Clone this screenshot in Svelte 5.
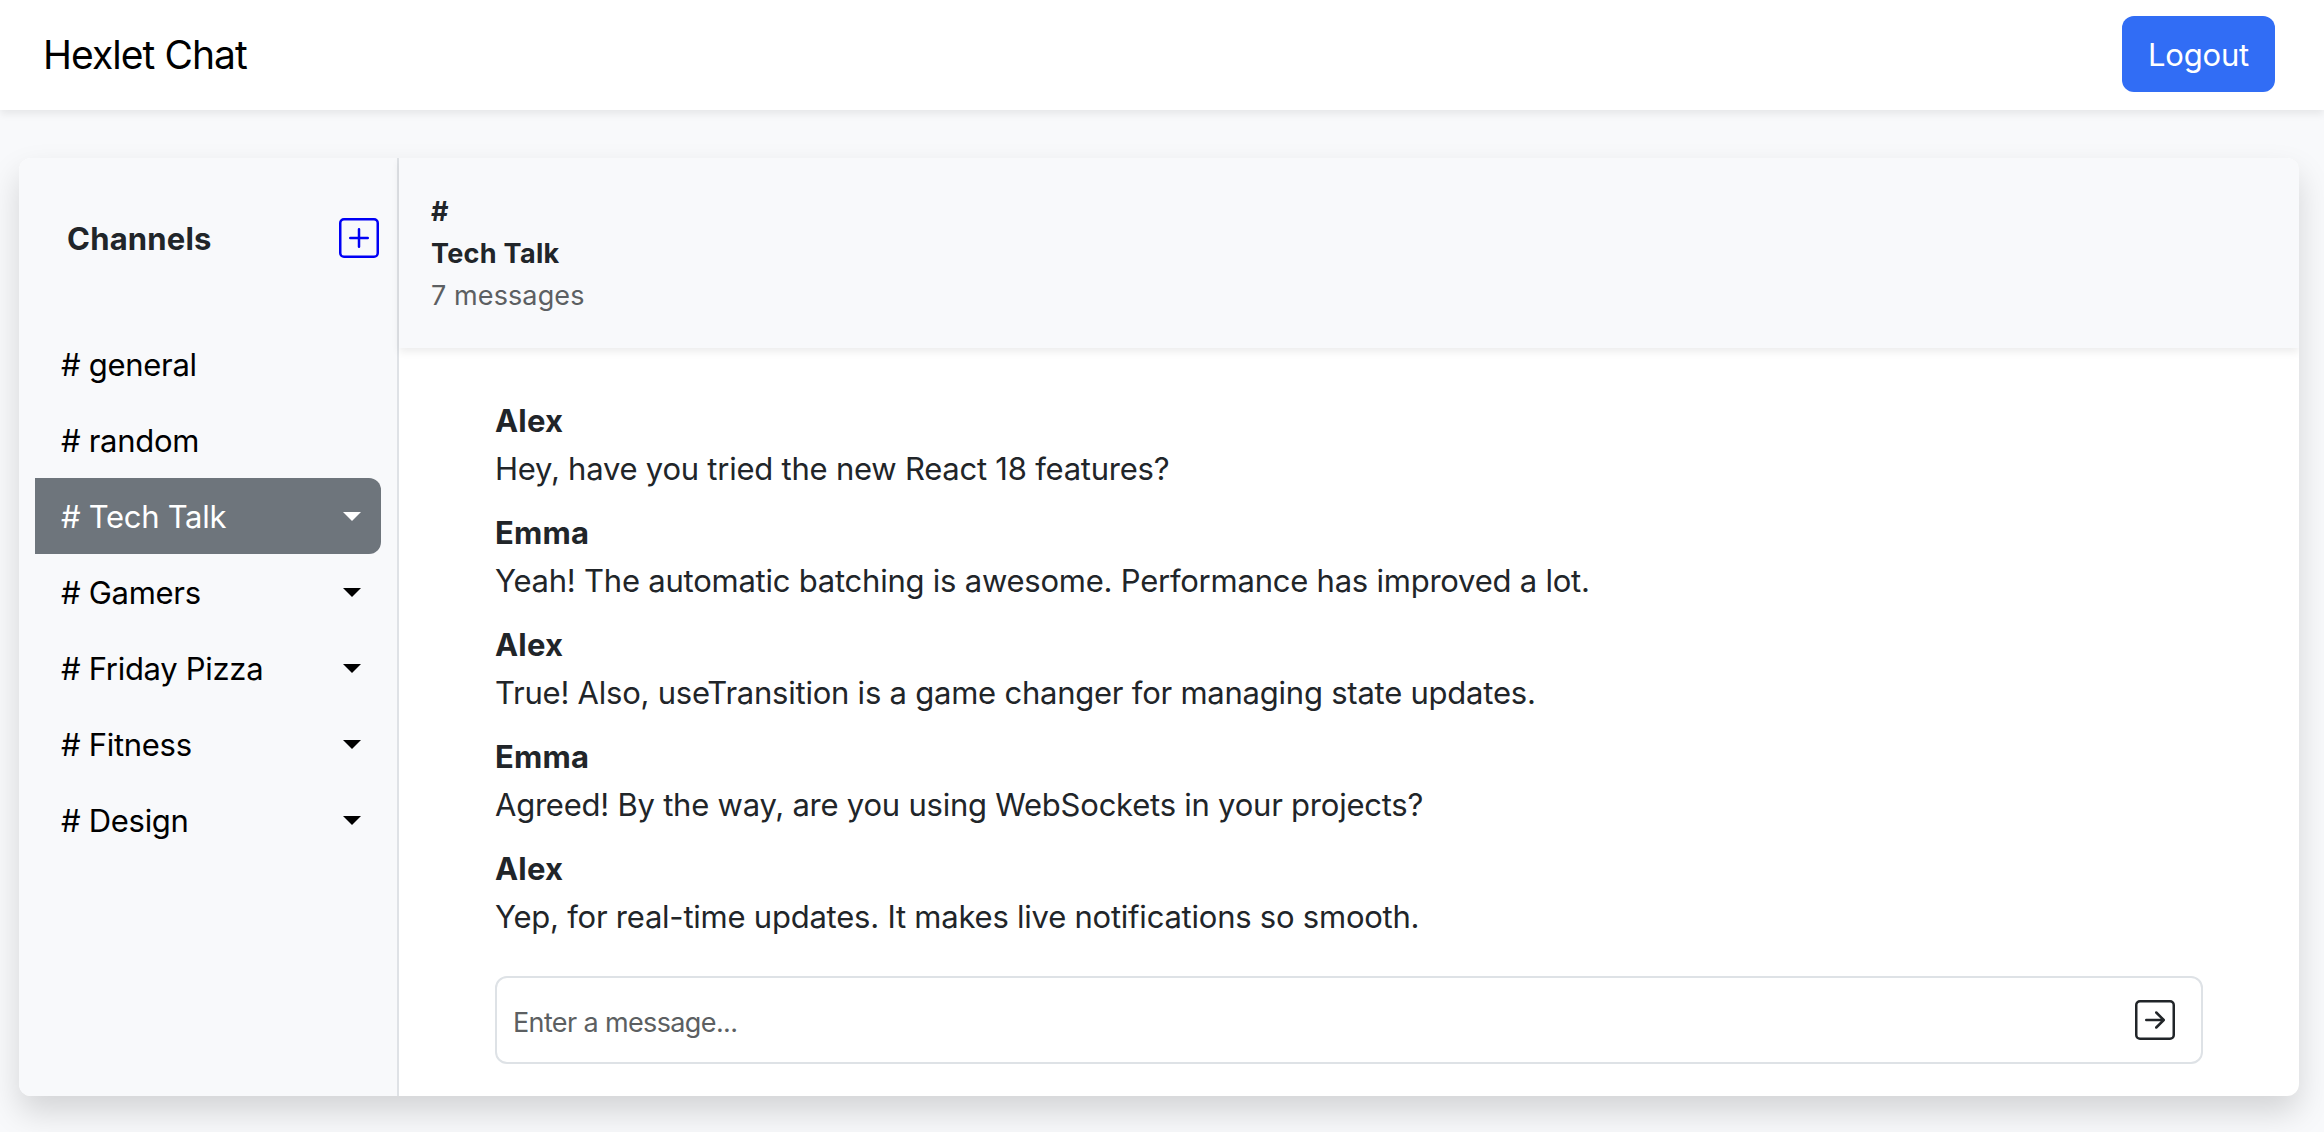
<script>
  const channels = [
    { name: 'general', removable: false },
    { name: 'random', removable: false },
    { name: 'Tech Talk', removable: true },
    { name: 'Gamers', removable: true },
    { name: 'Friday Pizza', removable: true },
    { name: 'Fitness', removable: true },
    { name: 'Design', removable: true },
  ];
  const messages = [
    { author: 'Alex', text: 'Hey, have you tried the new React 18 features?' },
    { author: 'Emma', text: 'Yeah! The automatic batching is awesome. Performance has improved a lot.' },
    { author: 'Alex', text: 'True! Also, useTransition is a game changer for managing state updates.' },
    { author: 'Emma', text: 'Agreed! By the way, are you using WebSockets in your projects?' },
    { author: 'Alex', text: 'Yep, for real-time updates. It makes live notifications so smooth.' },
  ];
  let active = $state('Tech Talk');
  let draft = $state('');
</script>

<div class="page">
  <nav class="navbar">
    <a class="brand" href="#top">Hexlet Chat</a>
    <button class="logout" type="button">Logout</button>
  </nav>

  <div class="card">
    <aside class="sidebar">
      <div class="sidebar-head">
        <b>Channels</b>
        <button class="icon-button add" type="button" aria-label="Add channel">
          <svg viewBox="0 0 16 16" width="40" height="40" fill="currentColor">
            <path d="M14 1a1 1 0 0 1 1 1v12a1 1 0 0 1-1 1H2a1 1 0 0 1-1-1V2a1 1 0 0 1 1-1zM2 0a2 2 0 0 0-2 2v12a2 2 0 0 0 2 2h12a2 2 0 0 0 2-2V2a2 2 0 0 0-2-2z" />
            <path d="M8 4a.5.5 0 0 1 .5.5v3h3a.5.5 0 0 1 0 1h-3v3a.5.5 0 0 1-1 0v-3h-3a.5.5 0 0 1 0-1h3v-3A.5.5 0 0 1 8 4" />
          </svg>
        </button>
      </div>
      <ul class="channels">
        {#each channels as channel}
          <li>
            <button
              class="channel"
              class:active={channel.name === active}
              type="button"
              onclick={() => (active = channel.name)}
            >
              <span># {channel.name}</span>
              {#if channel.removable}<i class="caret"></i>{/if}
            </button>
          </li>
        {/each}
      </ul>
    </aside>

    <main class="chat">
      <header class="chat-head">
        <b>#</b>
        <b>{active}</b>
        <span class="count">7 messages</span>
      </header>
      <div class="messages">
        {#each messages as message}
          <div class="message">
            <b>{message.author}</b>
            <p>{message.text}</p>
          </div>
        {/each}
      </div>
      <form class="composer">
        <input bind:value={draft} placeholder="Enter a message..." aria-label="Message" />
        <button class="icon-button" type="button" aria-label="Send">
          <svg viewBox="0 0 16 16" width="40" height="40" fill="currentColor">
            <path fill-rule="evenodd" d="M15 2a1 1 0 0 0-1-1H2a1 1 0 0 0-1 1v12a1 1 0 0 0 1 1h12a1 1 0 0 0 1-1zM0 2a2 2 0 0 1 2-2h12a2 2 0 0 1 2 2v12a2 2 0 0 1-2 2H2a2 2 0 0 1-2-2zm4.500 5.500a.5.5 0 0 0 0 1h5.793l-2.147 2.146a.5.5 0 0 0 .708.708l3-3a.5.5 0 0 0 0-.708l-3-3a.5.5 0 1 0-.708.708L10.293 7.500z" />
          </svg>
        </button>
      </form>
    </main>
  </div>
</div>

<style>
  :global(body) {
    margin: 0;
    background: #f8f9fb;
  }

  .page {
    box-sizing: border-box;
    display: flex;
    flex-direction: column;
    height: 1132px;
    overflow: hidden;
    font-family: Inter, sans-serif;
    font-size: 31px;
    line-height: 48px;
    color: #212529;
  }

  .page * {
    box-sizing: border-box;
  }

  button,
  input {
    margin: 0;
    padding: 0;
    border: 0;
    background: none;
    font: inherit;
    letter-spacing: inherit;
    color: inherit;
  }

  b {
    font-weight: 700;
    letter-spacing: 0.2px;
  }

  .navbar {
    flex: none;
    display: flex;
    align-items: center;
    justify-content: space-between;
    height: 110px;
    padding: 0 49px 2px 43px;
    background: #fff;
    box-shadow: 0 4px 8px rgba(0, 0, 0, 0.075);
  }

  .brand {
    padding-top: 2px;
    font-size: 39px;
    letter-spacing: -0.95px;
    color: #000;
    text-decoration: none;
  }

  .logout {
    width: 153px;
    height: 76px;
    padding-top: 2px;
    border-radius: 12px;
    background: #316df5;
    color: #fff;
    letter-spacing: -0.2px;
  }

  .card {
    flex: none;
    display: flex;
    height: 938px;
    margin: 48px 25px 0 19px;
    border-radius: 12px;
    background: #fff;
    box-shadow: 0 16px 32px rgba(0, 0, 0, 0.15);
    overflow: hidden;
  }

  .sidebar {
    flex: none;
    width: 380px;
    border-right: 2px solid #dfe2e6;
    background: #f8f9fb;
  }

  .sidebar-head {
    display: flex;
    justify-content: space-between;
    align-items: center;
    height: 160px;
    padding: 0 18px 0 48px;
  }

  .sidebar-head b {
    padding-top: 2px;
  }

  .icon-button {
    display: flex;
    width: 40px;
    height: 40px;
  }

  .add {
    color: #0000f5;
  }

  .channels {
    display: flex;
    flex-direction: column;
    margin: 0;
    padding: 8px 16px;
    list-style: none;
  }

  .channel {
    display: flex;
    justify-content: space-between;
    align-items: center;
    width: 100%;
    height: 76px;
    padding: 0 20px 0 26px;
    border-radius: 0 12px 12px 0;
    color: #000;
    letter-spacing: -0.3px;
  }

  .channel span {
    padding-top: 2px;
  }

  .channel.active {
    background: #6e757c;
    color: #fff;
  }

  .caret {
    border: 9px solid transparent;
    border-top-color: currentColor;
    border-bottom: 0;
  }

  .chat {
    flex: 1;
    display: flex;
    flex-direction: column;
    min-width: 0;
  }

  .chat-head {
    display: flex;
    flex-direction: column;
    padding: 33px 32px 31px;
    background: #f8f9fb;
    box-shadow: 0 4px 8px rgba(0, 0, 0, 0.075);
    font-size: 27px;
    line-height: 42px;
  }

  .chat-head b {
    letter-spacing: 0.3px;
  }

  .count {
    color: #5c5f62;
    letter-spacing: 0.1px;
  }

  .messages {
    flex: 1;
    display: flex;
    flex-direction: column;
    gap: 16px;
    padding: 49px 96px 0;
  }

  .message p {
    margin: 0;
    letter-spacing: -0.23px;
  }

  .composer {
    display: flex;
    align-items: center;
    justify-content: space-between;
    height: 88px;
    margin: 0 96px 32px;
    padding: 0 26px 0 16px;
    border: 2px solid #dee2e6;
    border-radius: 12px;
  }

  input {
    flex: 1;
    height: 60px;
    padding-top: 4px;
    outline: 0;
    font-size: 27px;
    letter-spacing: -0.63px;
  }

  input::placeholder {
    color: #5c5f62;
    opacity: 1;
  }
</style>
